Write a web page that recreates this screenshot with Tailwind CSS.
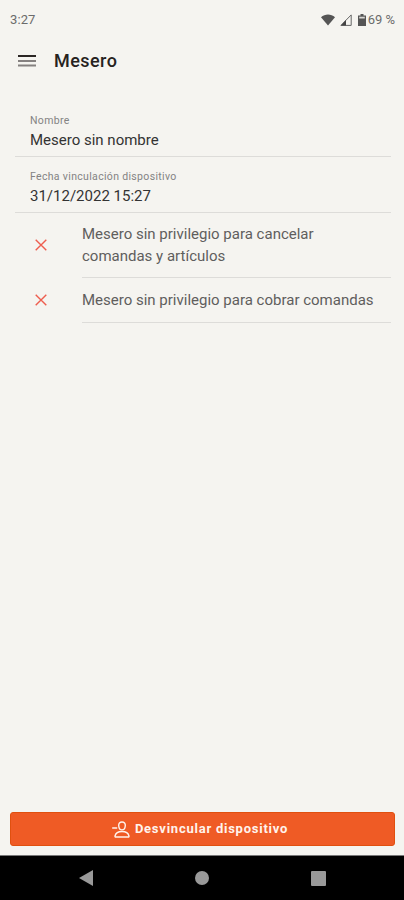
<!DOCTYPE html>
<html lang="es">
<head>
  <meta charset="utf-8">
  <meta name="viewport" content="width=device-width, initial-scale=1">
  <title>Mesero</title>
  <script src="https://cdn.jsdelivr.net/npm/@tailwindcss/browser@4"></script>
</head>
<body class="flex h-screen flex-col overflow-hidden bg-[#f5f4f0] font-['Roboto',sans-serif] text-[#333]">

  <!-- status bar -->
  <div class="flex h-10 shrink-0 items-center justify-between pl-2.5 pr-[9px] text-[#6b6b6b]">
    <span class="text-[13px] tracking-[0.1px]">3:27</span>
    <div class="flex items-center">
      <svg class="h-3 w-3.5" viewBox="0 0 14 12" fill="#555"><path d="M0 3.200C4-.3 10-.3 14 3.200L7 11.600z"/></svg>
      <svg class="ml-[5px] h-3 w-3" viewBox="0 0 12 12" fill="none" stroke="#666"><path d="M11.200.9V11.400H.9z"/><path d="M6 6v5.400H.9z" fill="#444" stroke="none"/></svg>
      <svg class="ml-[6px] h-3 w-2" viewBox="0 0 8 12"><path d="M2.500 0h3v1.500H8V12H0V1.500h2.500z" fill="#555"/><path d="M1.200 2.700h5.600v1.800H1.200z" fill="#d8d7d3"/></svg>
      <span class="ml-0.5 text-[13px]">69 %</span>
    </div>
  </div>

  <header class="flex h-10 shrink-0 items-center gap-[18px] pl-[18px]">
    <svg class="h-3.5 w-[18px]" viewBox="0 0 18 14"><path d="M0 3h18" stroke="#2b2624" stroke-width="2"/><path d="M0 8h18M0 12.500h18" stroke="#858180" stroke-width="2"/></svg>
    <h1 class="text-[18px] font-medium tracking-[0.45px] text-[#262220]">Mesero</h1>
  </header>

  <main class="flex-1 pt-5">
    <div class="ml-[15px] mr-[13px] h-[57px] border-b border-[#dddcd9] pl-[15px] pt-3.5">
      <p class="text-[10.5px] leading-[14px] tracking-[0.33px] text-[#838383]">Nombre</p>
      <p class="pt-[3px] text-[15px] leading-[18px] whitespace-nowrap">Mesero sin nombre</p>
    </div>
    <div class="ml-[15px] mr-[13px] h-14 border-b border-[#dddcd9] pl-[15px] pt-[13px]">
      <p class="text-[10.5px] leading-[14px] tracking-[0.33px] text-[#838383]">Fecha vinculación dispositivo</p>
      <p class="pt-[3px] text-[15px] leading-[18px] whitespace-nowrap">31/12/2022 15:27</p>
    </div>

    <ul class="text-[15px] leading-[22px] text-[#5f5e5d]">
      <li class="flex h-[65px] items-center pl-[35px] pr-[13px]">
        <svg class="mb-px h-3 w-3 shrink-0" viewBox="0 0 12 12" fill="none" stroke="#ee5d4e" stroke-width="1.400"><path d="M.7.700l10.600 10.600M11.300.700L.7 11.300"/></svg>
        <div class="ml-[35px] flex h-full flex-1 items-center border-b border-[#dddcd9]">
          <span class="whitespace-nowrap">Mesero sin privilegio para cancelar<br>comandas y artículos</span>
        </div>
      </li>
      <li class="flex h-[45px] items-center pl-[35px] pr-[13px]">
        <svg class="mb-px h-3 w-3 shrink-0" viewBox="0 0 12 12" fill="none" stroke="#ee5d4e" stroke-width="1.400"><path d="M.7.700l10.600 10.600M11.300.700L.7 11.300"/></svg>
        <div class="ml-[35px] flex h-full flex-1 items-center border-b border-[#dddcd9]">
          <span class="whitespace-nowrap">Mesero sin privilegio para cobrar comandas</span>
        </div>
      </li>
    </ul>
  </main>

  <footer class="shrink-0 pb-[9px] pl-2.5 pr-[9px]">
    <button class="flex h-[34px] w-full items-center justify-center gap-[5px] rounded-[3px] border border-[#e0500f] bg-[#ef5b25] pr-[5px] text-[#fff3ec]">
      <svg class="h-[17px] w-[18px]" viewBox="0 0 18 17" fill="none" stroke="currentColor" stroke-width="1.400" stroke-linejoin="round" stroke-linecap="round"><path d="M.7 7h4"/><path d="M10 1c2.200 0 3.500 1.500 3.300 3.700C13.100 7 11.800 8.900 10 8.900S6.900 7 6.700 4.700C6.500 2.500 7.800 1 10 1z"/><path d="M10 10.500c-3.400 0-6.300 1.500-7 4.500-.1.600.2 1 .8 1h12.400c.6 0 .9-.4.8-1-.7-3-3.600-4.500-7-4.500z"/></svg>
      <span class="text-[13px] font-bold tracking-[0.76px] whitespace-nowrap">Desvincular dispositivo</span>
    </button>
  </footer>

  <!-- system navigation -->
  <nav class="flex h-[45px] shrink-0 items-center justify-between border-t border-[#777] bg-black pl-[79px] pr-[78px]">
    <svg class="h-4 w-3.5" viewBox="0 0 14 16" fill="#999"><path d="M14 0v16L0 8z"/></svg>
    <div class="size-3.5 rounded-full bg-[#999]"></div>
    <div class="size-[15px] rounded-[1px] bg-[#999]"></div>
  </nav>
</body>
</html>
